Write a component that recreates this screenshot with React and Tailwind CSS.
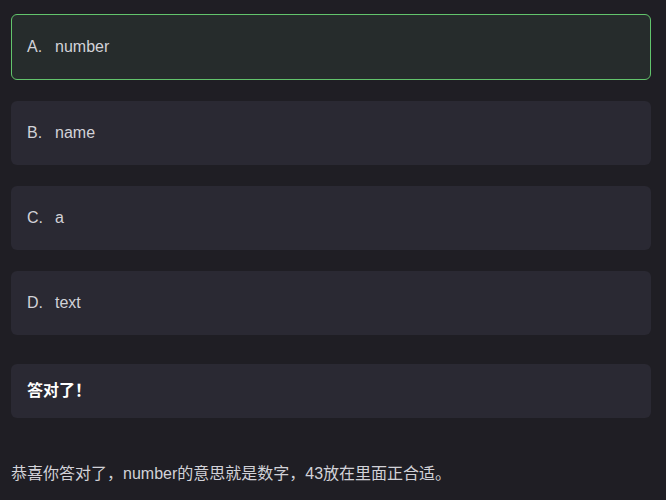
import React from "react";

const options = [
  { label: "A.", text: "number", selected: true },
  { label: "B.", text: "name" },
  { label: "C.", text: "a" },
  { label: "D.", text: "text" },
];

export default function App() {
  return (
    <div
      className="min-h-[500px] w-full bg-[#1f1e24] pl-[11px] pr-[15px] pt-[14px]"
      style={{ fontFamily: '"Liberation Sans", Arial, "Noto Sans CJK SC", sans-serif' }}
    >
      {options.map((o) => (
        <div
          key={o.label}
          className={
            o.selected
              ? "mb-[21px] flex h-[66px] items-center rounded-md border border-[#62c46c] bg-[#262c2c] px-[15px] text-[16px] text-[#d2d2d8]"
              : "mb-[21px] flex h-[64px] items-center rounded-md border border-transparent bg-[#2a2933] px-[15px] text-[16px] text-[#d2d2d8]"
          }
        >
          <span className="w-[28px]">{o.label}</span>
          <span>{o.text}</span>
        </div>
      ))}
      <div className="mt-[29px] flex h-[54px] items-center rounded-md bg-[#2a2933] px-[16px] text-[16px] font-bold text-white">
        答对了！
      </div>
      <p className="mt-[44px] text-[16px] leading-[24px] text-[#d2d2d8]">
        恭喜你答对了，number的意思就是数字，43放在里面正合适。
      </p>
    </div>
  );
}
